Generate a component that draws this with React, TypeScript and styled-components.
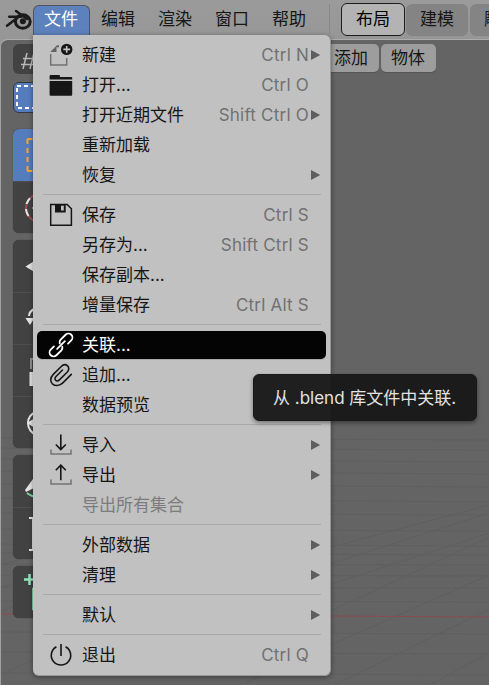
import React from "react";
import styled, { createGlobalStyle, css } from "styled-components";

const Global = createGlobalStyle`
  * { box-sizing: border-box; }
  body { margin: 0; overflow: hidden; background: #989898; }
`;

const Window = styled.div`
  position: relative;
  width: 489px;
  height: 685px;
  overflow: hidden;
  display: flex;
  flex-direction: column;
  background: #989898;
  color: #161616;
  font: 17px/30px Inter, "Noto Sans CJK SC", sans-serif;
  white-space: pre;
`;

const TopBar = styled.header`
  flex: none;
  height: 39px;
  display: flex;
  align-items: flex-start;
  padding-left: 5px;
  background: linear-gradient(#9b9b9b, #969696);
  svg { flex: none; margin-top: 9px; }
`;

const MenuTitle = styled.div<{ $active?: boolean }>`
  flex: none;
  width: 57px;
  height: 30px;
  margin-top: 5px;
  line-height: 29px;
  text-align: center;
  text-indent: -1px;
  ${(p) =>
    p.$active &&
    css`
      background: #5d81bd;
      color: #fff;
      border: 1px solid #50545c;
      border-bottom: 0;
      border-radius: 6px 6px 0 0;
      line-height: 27px;
    `}
`;

const BarDivider = styled.div`
  flex: none;
  width: 1px;
  height: 30px;
  margin: 4px 11px 0 11px;
  background: #888;
`;

const Tab = styled.div<{ $active?: boolean }>`
  flex: none;
  width: ${(p) => (p.$active ? 64 : 62)}px;
  height: ${(p) => (p.$active ? 33 : 32)}px;
  margin: ${(p) => (p.$active ? "3px 1px 0 0" : "4px 2px 0 0")};
  line-height: 30px;
  text-align: center;
  border-radius: 6px;
  background: ${(p) => (p.$active ? "#b3b3b3" : "#848484")};
  border: ${(p) => (p.$active ? "1px solid #1c1c1c" : "0")};
  color: ${(p) => (p.$active ? "#000" : "#161616")};
`;

const Viewport = styled.main`
  position: relative;
  flex: 1;
  margin-left: 1px;
  display: flex;
  flex-direction: column;
  overflow: hidden;
  background: #646464;
  border-top: 1px solid #adadad;
  border-top-left-radius: 7px;
  box-shadow: -1px 0 0 #a2a2a2;
`;

const FloorGrid = styled.svg`
  position: absolute;
  left: 0;
  bottom: 0;
`;

const ViewHeader = styled.div`
  position: relative;
  display: flex;
  height: 39px;
  padding: 4px 0 0 12px;
`;

const EditorButton = styled.div`
  width: 42px;
  height: 30px;
  margin-right: 269px;
  border-radius: 6px;
  background: #424242;
`;

const HeaderButton = styled.div`
  width: 55px;
  height: 28px;
  margin-right: 2px;
  border-radius: 5px;
  background: #9d9d9d;
  line-height: 28px;
  text-align: center;
  text-indent: -1px;
  box-shadow: 0 1px 1px #555;
`;

const Sidebar = styled.div`
  position: relative;
  width: 52px;
  margin-left: 11.5px;
  padding-top: 3px;
`;

const ModeButton = styled.div`
  height: 31px;
  margin-bottom: 16px;
  overflow: hidden;
  border: 1px solid #34373d;
  border-radius: 6px;
  background: #557cbd;
  svg { display: block; }
`;

const ToolGroup = styled.div`
  margin-bottom: 7px;
  overflow: hidden;
  border-radius: 6px;
  background: #424242;
  box-shadow: 0 0 1px #303030;
`;

const Tool = styled.div<{ $active?: boolean }>`
  height: 52px;
  background: ${(p) => (p.$active ? "#557cbd" : "transparent")};
  & + & { border-top: 1px solid #4d4d4d; }
  svg { display: block; }
`;

const Menu = styled.nav`
  position: absolute;
  left: 33px;
  top: 35px;
  width: 298px;
  height: 641px;
  display: flex;
  flex-direction: column;
  padding: 5px 4px;
  background: #c1c1c1;
  border: solid #989898;
  border-width: 0 1px 1px 0;
  border-radius: 0 6px 6px 6px;
  box-shadow: 0 1px 5px rgba(0, 0, 0, 0.42);
`;

const Item = styled.div<{ $state?: "hover" | "disabled" }>`
  flex: none;
  display: grid;
  grid-template-columns: 45px 1fr auto 15px;
  align-items: center;
  width: 289px;
  height: 30px;
  color: ${(p) => (p.$state === "disabled" ? "#7c7c7c" : "#161616")};
  ${(p) =>
    p.$state === "hover" &&
    css`
      height: 28px;
      margin: 1px 0;
      line-height: 28px;
      color: #fff;
      background: #040404;
      border-radius: 5px;
      box-shadow: 0 2px 0 -1px #aaa;
    `}
`;

const IconSlot = styled.span`
  height: 24px;
  padding-left: 12px;
  svg { display: block; overflow: visible; }
`;

const Shortcut = styled.span`
  color: #717171;
  letter-spacing: 0.22px;
  margin-right: 2px;
`;

const Arrow = styled.svg`
  display: block;
`;

const Separator = styled.hr`
  flex: none;
  width: 278px;
  height: 1px;
  margin: 4px 0 5px 6px;
  border: 0;
  background: #a9a9a9;
`;

const Tooltip = styled.div`
  position: absolute;
  left: 253px;
  top: 374px;
  width: 224px;
  height: 47px;
  padding-left: 19px;
  border: 1px solid #181818;
  border-radius: 6px;
  line-height: 46px;
  color: #e3e3e3;
  background: rgba(25, 25, 25, 0.965);
  box-shadow: 0 2px 4px rgba(0, 0, 0, 0.4);
`;

const Glyph = ({ children, w = 1.6 }: { children: React.ReactNode; w?: number }) => (
  <svg width="24" height="24" viewBox="0 0 24 24" fill="none" stroke="currentColor" strokeWidth={w}>
    {children}
  </svg>
);

const icons: Record<string, React.ReactNode> = {
  new: (
    <Glyph>
      <path d="M10 2.300H8L1.200 9h6.300V4.200H10z" fill="#626262" stroke="none" />
      <path d="M1.700 11v11h16v-7" stroke="#717171" strokeWidth="1.500" />
      <circle cx="17.700" cy="6.400" r="5.700" fill="#161616" stroke="none" />
      <path d="M17.700 3v6.800M14.300 6.400h6.800" stroke="#c1c1c1" strokeWidth="1.600" />
    </Glyph>
  ),
  open: (
    <Glyph>
      <path d="M.6 6.500V3q0-1 1-1H10q1 0 1 1v1h11.200q1 0 1 1v1.500zM.6 8h22.600v13.800q0 1-1 1H1.600q-1 0-1-1z" fill="#161616" stroke="none" />
    </Glyph>
  ),
  save: (
    <Glyph w={1.5}>
      <path d="M1.700 1.500h16.500l4.200 4.200v16.600H1.700z" />
      <path d="M6 1.200h10.700v8.300H6z" fill="#161616" stroke="none" />
      <path d="M12 2.700h2.800v4.800H12z" fill="#c1c1c1" stroke="none" />
    </Glyph>
  ),
  link: (
    <Glyph w={1.8}>
      <g transform="translate(12 12) rotate(-45)" strokeLinecap="round">
        <path d="M6 4H10.500a4 4 0 0 0 0-8H3.500a4 4 0 0 0-3.300 2" />
        <path d="M-6-4H-10.500a4 4 0 0 0 0 8H-3.500a4 4 0 0 0 3.300-2" />
        <path d="M-5.500 0h11" />
      </g>
    </Glyph>
  ),
  append: (
    <Glyph>
      <path d="M22.300 11.400l-8.200 8.200c-7.600 7.600-17-1-9.800-8.200L12 3.700c4.800-4.800 10.700.9 6.100 5.500l-7.700 7.700c-2.800 2.800-6.200-.6-3.400-3.400l6.500-6.500" strokeLinecap="round" />
    </Glyph>
  ),
  import: (
    <Glyph>
      <path d="M11.800 1.500v15M6.800 11.500l5 5 5-5" />
      <path d="M2 16.500V21h20v-4.500" stroke="#747474" strokeWidth="1.500" />
    </Glyph>
  ),
  export: (
    <Glyph>
      <path d="M11.800 17.200v-15M6.800 7.200l5-5 5 5" />
      <path d="M2 16.500V21h20v-4.500" stroke="#747474" strokeWidth="1.500" />
    </Glyph>
  ),
  quit: (
    <Glyph>
      <path d="M7.400 3.800a9.700 9.700 0 1 0 9.200 0M12 1v12" />
    </Glyph>
  ),
};

type Entry = { label: string; icon?: string; keys?: string; sub?: boolean; state?: "hover" | "disabled" };

const groups: Entry[][] = [
  [
    { label: "新建", icon: "new", keys: "Ctrl N", sub: true },
    { label: "打开...", icon: "open", keys: "Ctrl O" },
    { label: "打开近期文件", keys: "Shift Ctrl O", sub: true },
    { label: "重新加载" },
    { label: "恢复", sub: true },
  ],
  [
    { label: "保存", icon: "save", keys: "Ctrl S" },
    { label: "另存为...", keys: "Shift Ctrl S" },
    { label: "保存副本..." },
    { label: "增量保存", keys: "Ctrl Alt S" },
  ],
  [
    { label: "关联...", icon: "link", state: "hover" },
    { label: "追加...", icon: "append" },
    { label: "数据预览", sub: true },
  ],
  [
    { label: "导入", icon: "import", sub: true },
    { label: "导出", icon: "export", sub: true },
    { label: "导出所有集合", state: "disabled" },
  ],
  [
    { label: "外部数据", sub: true },
    { label: "清理", sub: true },
  ],
  [{ label: "默认", sub: true }],
  [{ label: "退出", icon: "quit", keys: "Ctrl Q" }],
];

const MenuItem = ({ entry }: { entry: Entry }) => (
  <Item $state={entry.state}>
    <IconSlot>{entry.icon && icons[entry.icon]}</IconSlot>
    <span>{entry.label}</span>
    <Shortcut>{entry.keys}</Shortcut>
    {entry.sub && (
      <Arrow width="10" height="10" viewBox="0 0 10 10">
        <path d="M0 0l9.200 5L0 10z" fill="#5e5e5e" />
      </Arrow>
    )}
  </Item>
);

const ToolArt = ({ children }: { children: React.ReactNode }) => (
  <svg width="52" height="52" viewBox="0 0 52 52" fill="none" stroke="#e6e6e6" strokeWidth="2">
    {children}
  </svg>
);

const Logo = () => (
  <svg width="28" height="23" viewBox="0 0 28 23" fill="none" stroke="#1b1b1b">
    <ellipse cx="17.800" cy="12.500" rx="7.400" ry="6.700" strokeWidth="3" />
    <circle cx="17.900" cy="12.300" r="3" fill="#1b1b1b" stroke="none" />
    <path d="M11 2l11 8M4.200 7.800h12M2 16.800L14 7.500" strokeWidth="2.500" strokeLinecap="round" />
  </svg>
);

export default function App() {
  return (
    <>
      <Global />
      <Window>
        <TopBar>
          <Logo />
          <MenuTitle $active>文件</MenuTitle>
          {["编辑", "渲染", "窗口", "帮助"].map((t) => (
            <MenuTitle key={t}>{t}</MenuTitle>
          ))}
          <BarDivider />
          <Tab $active>布局</Tab>
          <Tab>建模</Tab>
          <Tab>雕刻</Tab>
        </TopBar>

        <Viewport>
          <FloorGrid width="488" height="300" viewBox="1 385 488 300" fill="none">
            <g stroke="#5f5f5f" strokeWidth="1">
              <path d="M0 438l489 2M0 448l489 2M0 459l489 3M0 471l489 3M0 484l489 3M0 498l489 4M0 513l489 2M0 529l489 2M0 544l489 2M0 553l489 2M0 564l489 1M0 575l489 1M0 587l489 1M0 601l489 1M0 632l489 2M0 652l489 2M0 673l489 2" />
              <path d="M240 685L489 575M335 685L489 609M430 685L489 653M320 616L489 537M320 588L489 533M320 567L489 513M320 550L489 505M0 675L55 650M0 612L60 588M0 588L60 567M0 565L60 548" />
            </g>
            <path d="M0 614L489 617" stroke="#8a4b50" />
          </FloorGrid>
          <ViewHeader>
            <EditorButton>
              <svg width="30" height="30" fill="none" stroke="#b8b8b8" strokeWidth="1.500">
                <path d="M14 9l-4 16M10 14.500h18M8 20.500h20M21 9l-4 16" />
              </svg>
            </EditorButton>
            <HeaderButton>添加</HeaderButton>
            <HeaderButton>物体</HeaderButton>
          </ViewHeader>
          <Sidebar>
            <ModeButton>
              <svg width="50" height="29">
                <rect x="3" y="3" width="30" height="22" fill="none" stroke="#fff" strokeWidth="2" strokeDasharray="4 3" />
              </svg>
            </ModeButton>
            <ToolGroup>
              <Tool $active>
                <ToolArt>
                  <path d="M14.500 10v32M14.500 10h22M14.500 42h22" stroke="#f3a62c" strokeDasharray="5 4" />
                </ToolArt>
              </Tool>
              <Tool>
                <ToolArt>
                  <circle cx="27" cy="26" r="14" stroke="#a44a4f" />
                  <path d="M17 16.200A14 14 0 0 0 13.500 22M13 27a14 14 0 0 0 2.500 7" />
                  <path d="M19 26h7" strokeWidth="1" />
                </ToolArt>
              </Tool>
            </ToolGroup>
            <ToolGroup>
              <Tool>
                <ToolArt>
                  <path d="M12.500 26.500l8-5v10z" fill="#e6e6e6" stroke="none" />
                </ToolArt>
              </Tool>
              <Tool>
                <ToolArt>
                  <path d="M16 23q0-5 7-8" />
                  <path d="M12.500 25h9l-4.500 7z" fill="#e6e6e6" stroke="none" />
                  <path d="M20 36h2" strokeWidth="1" />
                </ToolArt>
              </Tool>
              <Tool>
                <ToolArt>
                  <path d="M18 24V14h10" stroke="#929292" />
                  <path d="M16.500 27h12v14h-12z" fill="#e6e6e6" stroke="none" />
                </ToolArt>
              </Tool>
              <Tool>
                <ToolArt>
                  <path d="M24 14q-9 4-9 12t9 13" />
                  <path d="M14 26l8-5v10z" fill="#e6e6e6" stroke="none" />
                </ToolArt>
              </Tool>
            </ToolGroup>
            <ToolGroup>
              <Tool>
                <ToolArt>
                  <path d="M20 24L12 35l1 2 8-4z" fill="#e6e6e6" stroke="none" />
                  <path d="M14 38q5 4 11 4" stroke="#7ed6a0" />
                </ToolArt>
              </Tool>
              <Tool>
                <ToolArt>
                  <path d="M16 10h8M16 42h8" />
                  <path d="M20 10v32" />
                </ToolArt>
              </Tool>
            </ToolGroup>
            <ToolGroup>
              <Tool>
                <ToolArt>
                  <path d="M11 13.500h11M16.500 8v11" stroke="#91e6ba" strokeWidth="2.500" />
                  <path d="M19.500 22v22h20V22z" fill="#4d7b60" stroke="#7ed6a0" strokeWidth="1" />
                </ToolArt>
              </Tool>
            </ToolGroup>
          </Sidebar>
        </Viewport>

        <Menu>
          {groups.map((group, i) => (
            <React.Fragment key={i}>
              {i > 0 && <Separator />}
              {group.map((entry) => (
                <MenuItem key={entry.label} entry={entry} />
              ))}
            </React.Fragment>
          ))}
        </Menu>
        <Tooltip>从 .blend 库文件中关联.</Tooltip>
      </Window>
    </>
  );
}
